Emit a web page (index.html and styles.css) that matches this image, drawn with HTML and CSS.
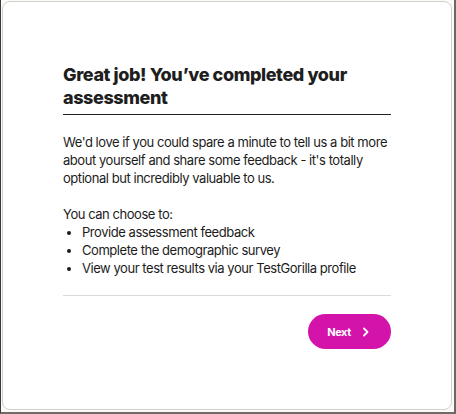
FILE: index.html
```html
<!DOCTYPE html>
<html>
<head>
<meta charset="utf-8">
<link rel="stylesheet" href="styles.css">
</head>
<body>
<div class="frame">
  <div class="card">
    <div class="content">
      <h1 class="title">Great job! You’ve completed your assessment</h1>
      <p class="text">We'd love if you could spare a minute to tell us a bit more about yourself and share some feedback - it's totally optional but incredibly valuable to us.</p>
      <p class="text lead">You can choose to:</p>
      <ul class="list">
        <li>Provide assessment feedback</li>
        <li>Complete the demographic survey</li>
        <li>View your test results via your TestGorilla profile</li>
      </ul>
      <div class="divider"></div>
      <div class="actions">
        <button class="next">Next
          <svg width="8" height="10" viewBox="0 0 8 10"><path d="M2 1.5 L5.5 5 L2 8.5" fill="none" stroke="#fff" stroke-width="1.8" stroke-linecap="round" stroke-linejoin="round"/></svg>
        </button>
      </div>
    </div>
  </div>
</div>
</body>
</html>
```
FILE: styles.css
```css
* { box-sizing: border-box; }
html, body { margin: 0; padding: 0; }
body {
  width: 456px;
  height: 414px;
  background: #fbfaf9;
  font-family: Inter, "Liberation Sans", sans-serif;
  color: #1c1c1c;
}
.frame {
  width: 456px;
  height: 414px;
  border-left: 1px solid #3a3a3a;
  border-right: 2px solid #6b6763;
  border-bottom: 2px solid #6f6b67;
  padding: 1px 2px 2px 1px;
}
.card {
  height: 100%;
  background: #fff;
  border: 1px solid #d3d0cc;
  border-radius: 8px;
}
.content {
  width: 328px;
  margin: 0 auto;
  padding-top: 61px;
}
.title {
  margin: 0;
  font-size: 18px;
  line-height: 23px;
  font-weight: 800;
  letter-spacing: -0.4px;
  color: #1e1e1e;
  padding-bottom: 5px;
  border-bottom: 1px solid #222;
}
.text {
  margin: 18px 0 0;
  font-size: 13px;
  line-height: 18px;
  letter-spacing: -0.45px;
}
.list {
  margin: 0;
  padding: 0 0 0 19px;
  font-size: 13px;
  line-height: 18px;
  letter-spacing: -0.45px;
}
.divider {
  margin-top: 18px;
  height: 1px;
  background: #dcdad7;
}
.actions {
  display: flex;
  justify-content: flex-end;
  padding-top: 18px;
}
.next {
  width: 83px;
  height: 35px;
  border: none;
  border-radius: 18px;
  background: #d313a9;
  color: #fff;
  font-family: Inter, "Liberation Sans", sans-serif;
  font-weight: 700;
  font-size: 11px;
  letter-spacing: -0.4px;
  display: flex;
  align-items: center;
  justify-content: center;
  gap: 11px;
  padding: 0 2px 0 0;
}
```
